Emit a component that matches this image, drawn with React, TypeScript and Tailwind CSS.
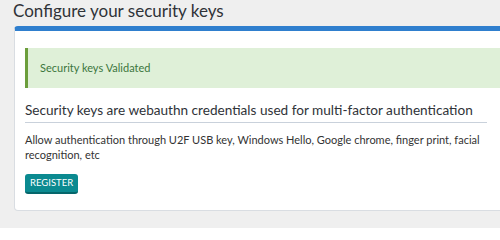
export default function App() {
  return (
    <div className="h-[228px] overflow-hidden bg-[#efefef] font-['Lato','Liberation_Sans',sans-serif] text-[#333]">
      <h1 className="pl-[13px] text-[17px] leading-[22px] text-[#2f3338]">
        Configure your security keys
      </h1>
      <div className="ml-[14px] mt-[4px] w-[520px] rounded-[4px] border border-[#d9dde2] border-t-[5px] border-t-[#2f7fce] bg-white px-[10px] pb-[16px] pt-[17px]">
        <div className="flex h-[40px] w-[520px] items-center border-l-[3px] border-[#6c9e3c] bg-[#dff0d8] pl-[12px] text-[11px] text-[#3c763d]">
          Security keys Validated
        </div>
        <h2 className="mt-[12px] w-[462px] whitespace-nowrap border-b border-[#c9d1db] pb-[2px] text-[13.6px] leading-[20px] text-[#2f3338]">
          Security keys are webauthn credentials used for multi-factor authentication
        </h2>
        <p className="mt-[9px] w-[462px] text-[11px] leading-[15px] text-[#333]">
          Allow authentication through U2F USB key, Windows Hello, Google chrome, finger print, facial
          recognition, etc
        </p>
        <button
          type="button"
          className="mt-[12px] h-[20px] rounded-[3px] border-b-2 border-[#05666b] bg-[#0b8a90] px-[5px] text-[9.5px] uppercase text-white"
        >
          Register
        </button>
      </div>
    </div>
  );
}
